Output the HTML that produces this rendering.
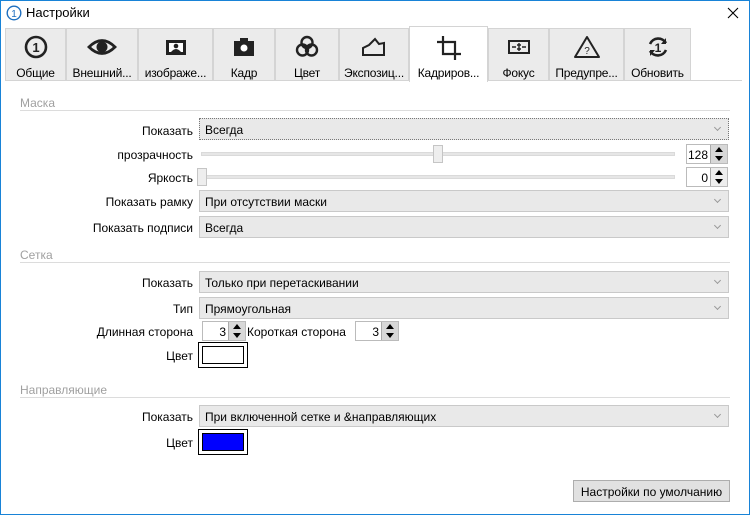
<!DOCTYPE html>
<html><head><meta charset="utf-8"><style>
*{box-sizing:border-box;margin:0;padding:0}
body{width:750px;height:515px;overflow:hidden;background:#fff;font-family:"Liberation Sans","DejaVu Sans",sans-serif;font-size:12px;color:#000;position:relative}
.a{position:absolute}
.win{left:0;top:0;width:750px;height:515px;border:1px solid #1883d7}
.tab{position:absolute;top:28px;height:53px;background:#ebebeb;border:1px solid #d4d4d4;border-bottom:none;text-align:center}
.tab span{position:absolute;left:0;right:0;top:37px;font-size:12px;white-space:nowrap;letter-spacing:-0.2px}
.tab svg{position:absolute;left:50%;top:5px;transform:translateX(-50%)}
.tab.sel{top:26px;height:56px;background:#fff;z-index:2}
.tab.sel span{top:39px}
.tab.sel svg{top:7px}
.sec{color:#a0a0a0;left:20px}
.line{left:20px;width:710px;height:1px;background:#dcdcdc}
.lbl{right:557px;text-align:right;white-space:nowrap}
.cb{left:199px;width:530px;height:22px;background:#e9e9e9;border:1px solid #c9c9c9;padding:4px 0 0 5px}
.cb:after{content:"";position:absolute;right:8px;top:6px;width:4px;height:4px;border-right:1px solid #999;border-bottom:1px solid #999;transform:rotate(45deg)}
.spin{height:20px;border:1px solid #bbb;background:#fff;text-align:right}
.spin .v{position:absolute;right:19px;top:3px;font-size:12px}
.spin .b{position:absolute;right:0;top:0;width:17px;height:18px;background:#d8d8d8;border-left:1px solid #aaa}
.spin .b:before,.spin .b:after{content:"";position:absolute;left:4px;border-left:4px solid transparent;border-right:4px solid transparent}
.spin .b:before{top:2px;border-bottom:5px solid #000}
.spin .b:after{top:11px;border-top:5px solid #000}
.track{height:4px;background:#e6e6e6;border:1px solid #dadada}
.thumb{width:10px;height:18px;background:#eee;border:1px solid #c5c5c5}
</style></head><body>
<div class="a win"></div>
<svg class="a" style="left:6px;top:5px" width="16" height="16"><circle cx="8" cy="8" r="6.8" fill="#fff" stroke="#1e6fbf" stroke-width="1.4"/><text x="8" y="12" font-size="10" text-anchor="middle" fill="#1e6fbf" font-family="Liberation Sans">1</text></svg>
<div class="a" style="left:26px;top:5px;font-size:13px">Настройки</div>
<svg class="a" style="left:727px;top:7px" width="12" height="12"><path d="M1 1L11 11M11 1L1 11" stroke="#000" stroke-width="1.1"/></svg>

<div class="tab" style="left:5px;width:61px"><svg width="26" height="26" viewBox="0 0 26 26"><circle cx="13" cy="13" r="10" fill="none" stroke="#222" stroke-width="2.6"/><text x="13" y="18" font-size="13" font-weight="bold" text-anchor="middle" fill="#222" font-family="Liberation Sans">1</text></svg><span>Общие</span></div>
<div class="tab" style="left:66px;width:72px"><svg width="30" height="26" viewBox="0 0 30 26"><path d="M2 13Q15 0 28 13Q15 26 2 13Z" fill="none" stroke="#222" stroke-width="2.8"/><circle cx="15" cy="13" r="5.5" fill="#222"/></svg><span>Внешний...</span></div>
<div class="tab" style="left:138px;width:75px"><svg width="26" height="26" viewBox="0 0 26 26"><rect x="3" y="6" width="20" height="15" fill="#222"/><rect x="6" y="9" width="14" height="9" fill="#fff"/><circle cx="13" cy="12" r="2.3" fill="#222"/><path d="M8 18Q13 12 18 18Z" fill="#222"/></svg><span>изображе...</span></div>
<div class="tab" style="left:213px;width:62px"><svg width="26" height="26" viewBox="0 0 26 26"><rect x="3" y="7" width="20" height="15" fill="#222"/><rect x="9" y="4" width="8" height="4" fill="#222"/><circle cx="13" cy="14" r="3.5" fill="#fff"/></svg><span>Кадр</span></div>
<div class="tab" style="left:275px;width:64px"><svg width="26" height="26" viewBox="0 0 26 26" fill="none" stroke="#222" stroke-width="2.4"><circle cx="13" cy="8.5" r="5.5"/><circle cx="8.5" cy="16" r="5.5"/><circle cx="17.5" cy="16" r="5.5"/></svg><span>Цвет</span></div>
<div class="tab" style="left:339px;width:70px"><svg width="28" height="26" viewBox="0 0 28 26"><path d="M3 21V14L9 11L15 5L19 10L24 9V21Z" fill="none" stroke="#222" stroke-width="2"/></svg><span>Экспозиц...</span></div>
<div class="tab sel" style="left:409px;width:79px"><svg width="28" height="28" viewBox="0 0 28 28"><path d="M8 2V20H26M2 8H20V26" fill="none" stroke="#222" stroke-width="2.2"/></svg><span>Кадриров...</span></div>
<div class="tab" style="left:488px;width:61px"><svg width="26" height="26" viewBox="0 0 26 26"><rect x="3" y="7" width="20" height="12" fill="none" stroke="#222" stroke-width="2"/><path d="M6 13H10M16 13H20M13 9V17M11 11H15M11 15H15" stroke="#222" stroke-width="1.4"/></svg><span>Фокус</span></div>
<div class="tab" style="left:549px;width:75px"><svg width="28" height="26" viewBox="0 0 28 26"><path d="M14 3L26 23H2Z" fill="none" stroke="#222" stroke-width="2" stroke-linejoin="round"/><text x="14" y="20" font-size="10" text-anchor="middle" fill="#222" font-family="Liberation Sans">?</text></svg><span>Предупре...</span></div>
<div class="tab" style="left:624px;width:67px"><svg width="26" height="26" viewBox="0 0 26 26"><path d="M5 10A9 9 0 0 1 21 9M21 16A9 9 0 0 1 5 17" fill="none" stroke="#222" stroke-width="2.6"/><path d="M21 4V10H16Z M5 22V16H10Z" fill="#222"/><text x="13" y="18" font-size="12" font-weight="bold" text-anchor="middle" fill="#222" font-family="Liberation Sans">1</text></svg><span>Обновить</span></div>
<div class="a" style="left:5px;top:80px;width:737px;height:1px;background:#d4d4d4"></div>

<div class="a sec" style="top:96px">Маска</div><div class="a line" style="top:110px"></div>
<div class="a lbl" style="top:124px">Показать</div>
<div class="a cb" style="top:118px;border:1px dotted #777">Всегда</div>
<div class="a lbl" style="top:148px">прозрачность</div>
<div class="a track" style="left:201px;top:152px;width:474px"></div>
<div class="a thumb" style="left:433px;top:145px"></div>
<div class="a spin" style="left:686px;top:144px;width:42px"><span class="v">128</span><span class="b"></span></div>
<div class="a lbl" style="top:171px">Яркость</div>
<div class="a track" style="left:201px;top:175px;width:474px"></div>
<div class="a thumb" style="left:197px;top:168px"></div>
<div class="a spin" style="left:686px;top:167px;width:42px"><span class="v">0</span><span class="b" style="background:#eee"></span></div>
<div class="a lbl" style="top:195px">Показать рамку</div>
<div class="a cb" style="top:190px">При отсутствии маски</div>
<div class="a lbl" style="top:221px">Показать подписи</div>
<div class="a cb" style="top:216px">Всегда</div>

<div class="a sec" style="top:248px">Сетка</div><div class="a line" style="top:262px"></div>
<div class="a lbl" style="top:276px">Показать</div>
<div class="a cb" style="top:271px">Только при перетаскивании</div>
<div class="a lbl" style="top:302px">Тип</div>
<div class="a cb" style="top:297px">Прямоугольная</div>
<div class="a lbl" style="top:325px">Длинная сторона</div>
<div class="a spin" style="left:202px;top:321px;width:44px"><span class="v">3</span><span class="b"></span></div>
<div class="a" style="left:247px;top:325px">Короткая сторона</div>
<div class="a spin" style="left:355px;top:321px;width:44px"><span class="v">3</span><span class="b"></span></div>
<div class="a lbl" style="top:349px">Цвет</div>
<div class="a" style="left:198px;top:342px;width:50px;height:26px;border:1px solid #000;background:#fff;padding:3px"><div style="width:100%;height:100%;border:1px solid #000;background:#fff"></div></div>

<div class="a sec" style="top:383px">Направляющие</div><div class="a line" style="top:397px"></div>
<div class="a lbl" style="top:410px">Показать</div>
<div class="a cb" style="top:405px">При включенной сетке и &amp;направляющих</div>
<div class="a lbl" style="top:436px">Цвет</div>
<div class="a" style="left:198px;top:429px;width:50px;height:26px;border:1px solid #000;background:#fff;padding:3px"><div style="width:100%;height:100%;border:1px solid #000;background:#0000ff"></div></div>

<div class="a" style="left:573px;top:480px;width:157px;height:22px;background:#e1e1e1;border:1px solid #adadad;text-align:center;padding-top:4px">Настройки по умолчанию</div>
</body></html>
